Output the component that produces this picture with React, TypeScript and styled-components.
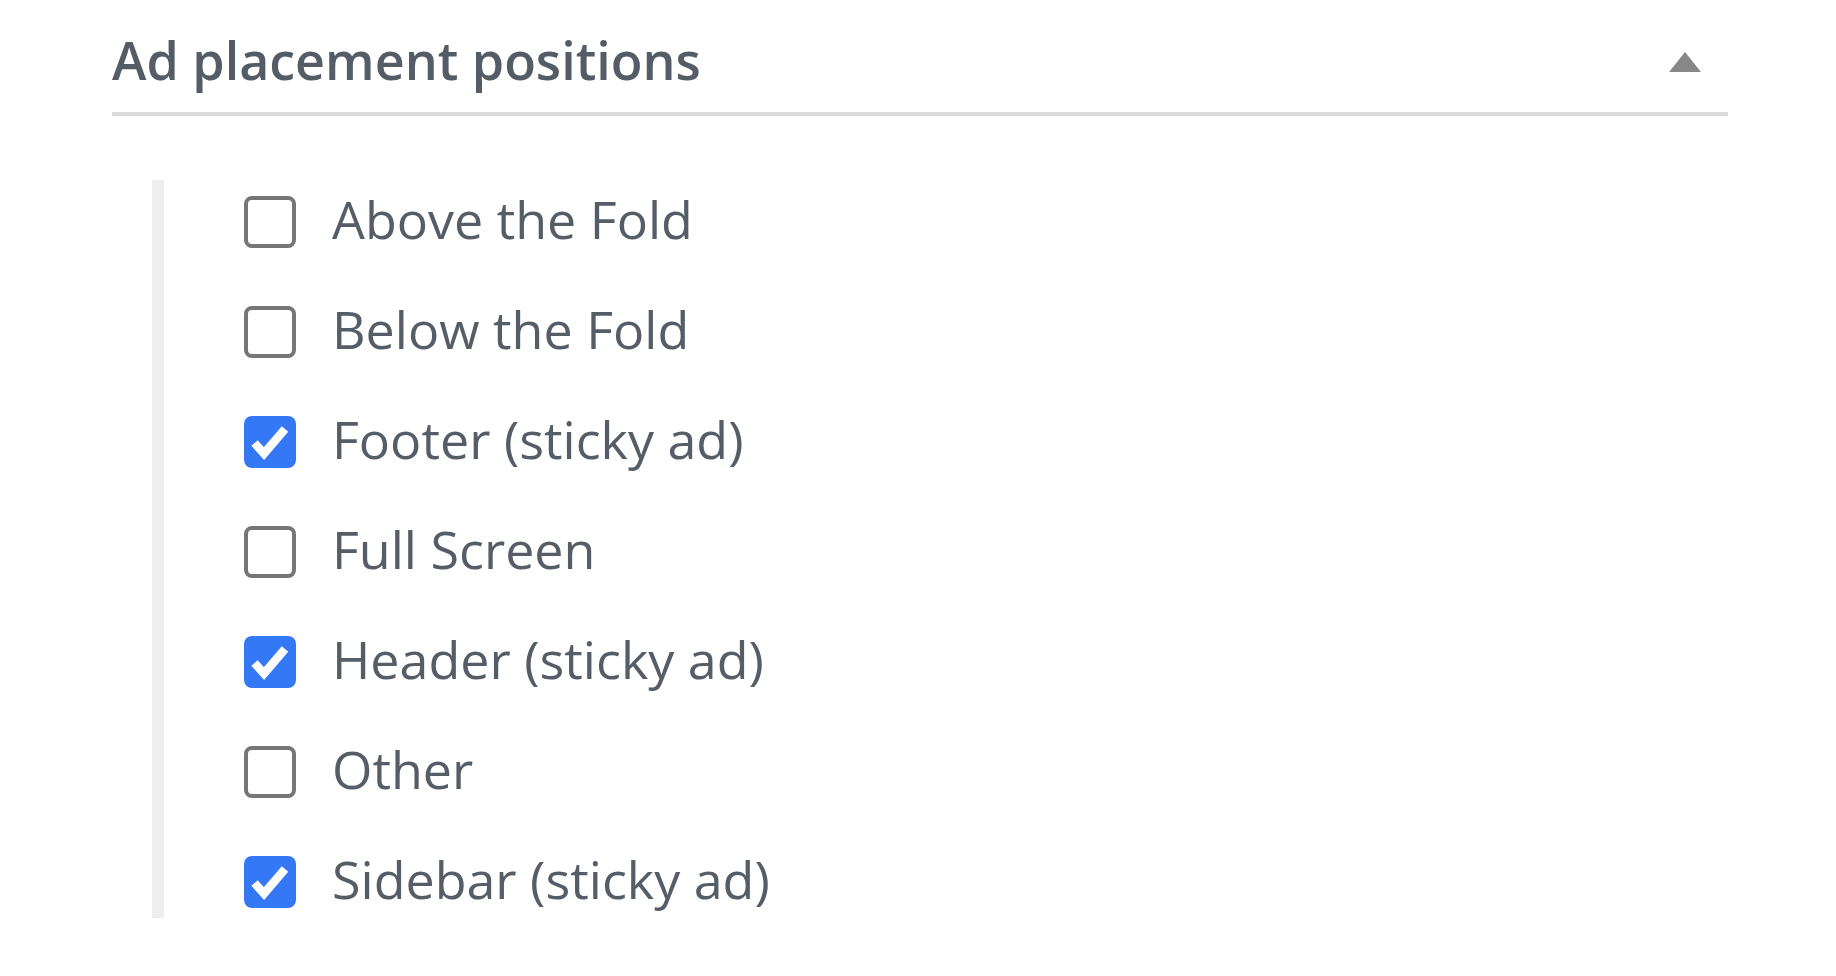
import { useState } from "react";
import styled, { createGlobalStyle } from "styled-components";

const GlobalStyle = createGlobalStyle`
  html, body {
    margin: 0;
    padding: 0;
    background: #ffffff;
  }
  body {
    font-family: "Open Sans", "Noto Sans", sans-serif;
  }
`;

const POSITIONS = [
  { label: "Above the Fold", checked: false },
  { label: "Below the Fold", checked: false },
  { label: "Footer (sticky ad)", checked: true },
  { label: "Full Screen", checked: false },
  { label: "Header (sticky ad)", checked: true },
  { label: "Other", checked: false },
  { label: "Sidebar (sticky ad)", checked: true },
];

export default function App() {
  const [items, setItems] = useState(POSITIONS);

  const toggle = (index: number) => {
    setItems((prev) =>
      prev.map((item, i) => (i === index ? { ...item, checked: !item.checked } : item))
    );
  };

  return (
    <>
      <GlobalStyle />
      <Section>
        <Header>
          <Title>Ad placement positions</Title>
          <Caret aria-hidden />
        </Header>
        <OptionList>
          {items.map((item, i) => (
            <Option key={item.label} onClick={() => toggle(i)}>
              <Box $checked={item.checked}>
                {item.checked && (
                  <svg width="52" height="52" viewBox="0 0 52 52">
                    <polyline
                      points="10.5,27 20,37.5 41,13"
                      fill="none"
                      stroke="#ffffff"
                      strokeWidth="8.5"
                    />
                  </svg>
                )}
              </Box>
              <Label>{item.label}</Label>
            </Option>
          ))}
        </OptionList>
      </Section>
    </>
  );
}

const Section = styled.section`
  width: 1616px;
  margin-left: 112px;
`;

const Header = styled.div`
  display: flex;
  align-items: center;
  justify-content: space-between;
  padding: 24px 27px 16px 0;
  border-bottom: 4px solid #dcdcdc;
`;

const Title = styled.h2`
  margin: 0;
  font-size: 52px;
  line-height: 72px;
  font-weight: 600;
  color: #545d65;
`;

const Caret = styled.span`
  width: 0;
  height: 0;
  margin-top: 4px;
  border-left: 16px solid transparent;
  border-right: 16px solid transparent;
  border-bottom: 20px solid #888888;
`;

const OptionList = styled.div`
  display: flex;
  flex-direction: column;
  gap: 58px;
  margin: 64px 0 0 40px;
  padding: 16px 0 10px 80px;
  border-left: 12px solid #eeeeee;
`;

const Option = styled.label`
  display: flex;
  align-items: center;
  gap: 36px;
  height: 52px;
  cursor: pointer;
`;

const Box = styled.span<{ $checked: boolean }>`
  box-sizing: border-box;
  flex: none;
  width: 52px;
  height: 52px;
  border-radius: 8px;
  display: flex;
  align-items: center;
  justify-content: center;
  background: ${(p) => (p.$checked ? "#3478f6" : "#ffffff")};
  border: ${(p) => (p.$checked ? "none" : "4px solid #767676")};
`;

const Label = styled.span`
  font-size: 52px;
  line-height: 52px;
  padding-bottom: 6px;
  color: #555e66;
  white-space: nowrap;
`;
